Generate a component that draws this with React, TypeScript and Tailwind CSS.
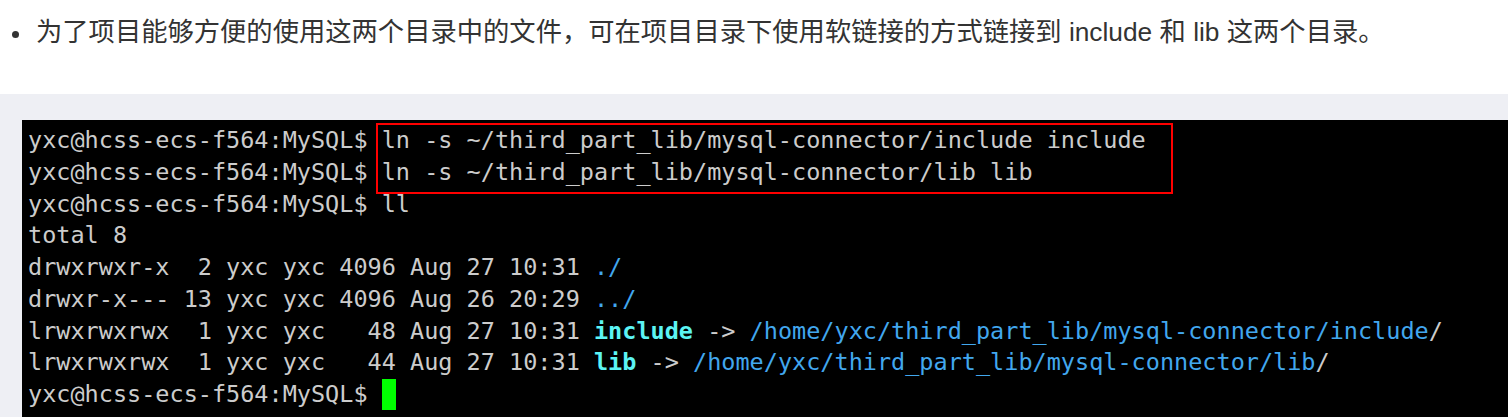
import { FC, ReactNode } from "react";

const mono = "font-['DejaVu_Sans_Mono',monospace]";

const Row: FC<{ children: ReactNode }> = ({ children }) => (
  <div className="whitespace-pre h-[31.75px] leading-[31.75px]">{children}</div>
);

const Dir: FC<{ children: ReactNode }> = ({ children }) => (
  <span className="text-[#42a7ee]">{children}</span>
);

const Link: FC<{ children: ReactNode }> = ({ children }) => (
  <span className="font-bold text-[#5cf4f4]">{children}</span>
);

const prompt = "yxc@hcss-ecs-f564:MySQL$ ";

export default function App() {
  return (
    <div className="w-[1508px] h-[417px] bg-white flex flex-col overflow-hidden">
      {/* note line */}
      <div className="h-[94px] shrink-0 pt-[13px] pl-[12px]">
        <div className="flex items-center h-[40px] text-[26.3px] text-[#333] font-['Liberation_Sans','Noto_Sans_CJK_SC',sans-serif]">
          <span className="w-[7px] h-[7px] rounded-full bg-[#333] mr-[17px] mt-[2px]" />
          <span>
            为了项目能够方便的使用这两个目录中的文件，可在项目目录下使用软链接的方式链接到 include 和 lib 这两个目录。
          </span>
        </div>
      </div>

      {/* code block */}
      <div className="flex-1 bg-[#eeeff4] pt-[26px] pl-[22px] flex">
        <div
          className={`relative flex-1 bg-black text-[#cccccc] text-[23.5px] pt-[5px] pl-[6px] ${mono}`}
        >
          <Row>{prompt}ln -s ~/third_part_lib/mysql-connector/include include</Row>
          <Row>{prompt}ln -s ~/third_part_lib/mysql-connector/lib lib</Row>
          <Row>{prompt}ll</Row>
          <Row>total 8</Row>
          <Row>
            drwxrwxr-x  2 yxc yxc 4096 Aug 27 10:31 <Dir>./</Dir>
          </Row>
          <Row>
            drwxr-x--- 13 yxc yxc 4096 Aug 26 20:29 <Dir>../</Dir>
          </Row>
          <Row>
            lrwxrwxrwx  1 yxc yxc   48 Aug 27 10:31 <Link>include</Link> -&gt;{" "}
            <Dir>/home/yxc/third_part_lib/mysql-connector/include</Dir>/
          </Row>
          <Row>
            lrwxrwxrwx  1 yxc yxc   44 Aug 27 10:31 <Link>lib</Link> -&gt;{" "}
            <Dir>/home/yxc/third_part_lib/mysql-connector/lib</Dir>/
          </Row>
          <Row>
            <span className="inline-flex items-center">
              {prompt}
              <span className="inline-block w-[14px] h-[31px] bg-[#00ff00]" />
            </span>
          </Row>

          {/* highlight box */}
          <div className="absolute left-[354px] top-[3px] w-[797px] h-[71px] border-2 border-[#ff0000]" />
        </div>
      </div>
    </div>
  );
}
